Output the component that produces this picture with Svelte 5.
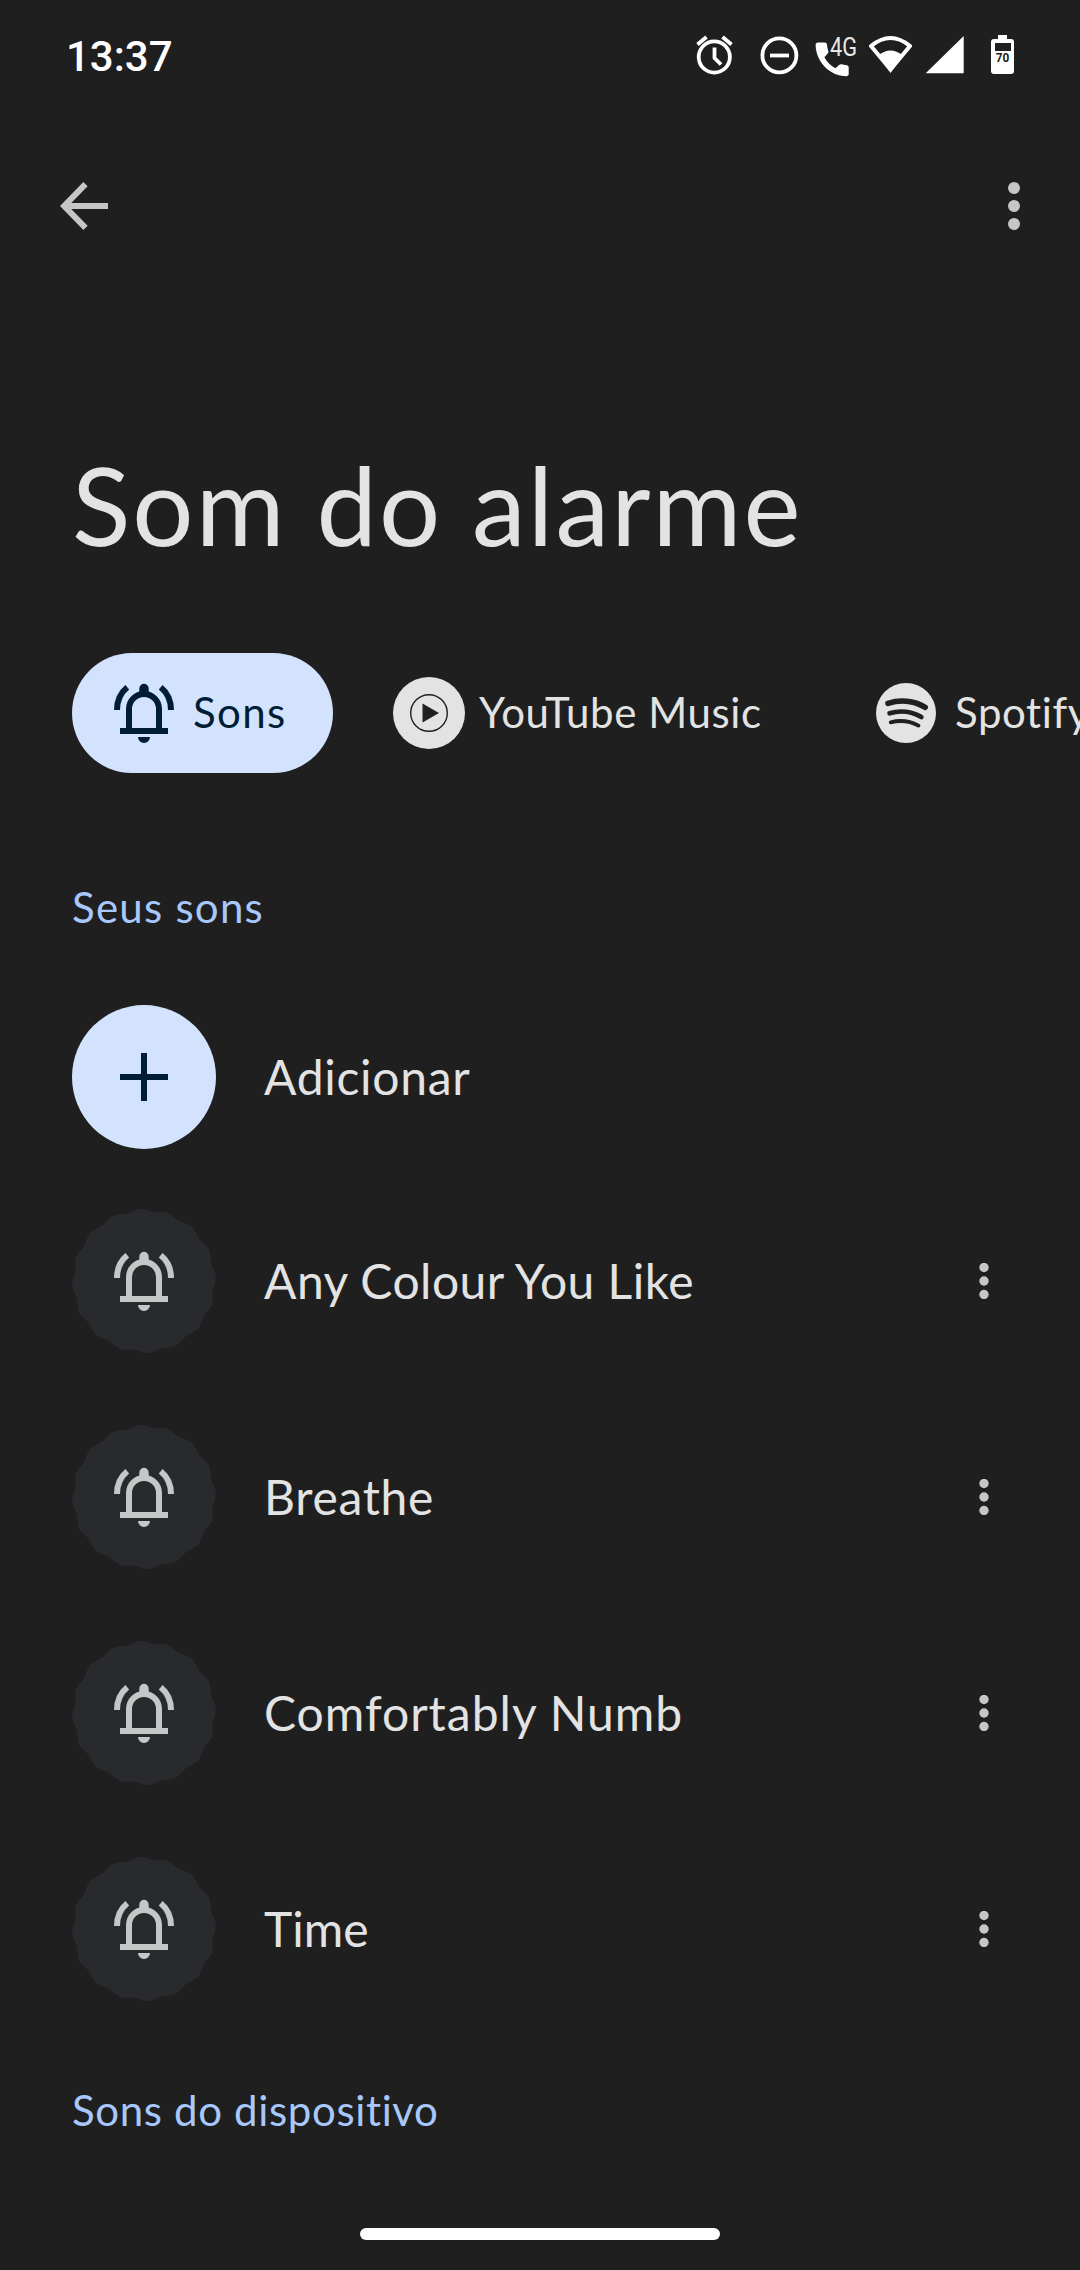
<script>
  const sounds = [
    { name: 'Any Colour You Like', cls: 'any' },
    { name: 'Breathe', cls: 'breathe' },
    { name: 'Comfortably Numb', cls: 'numb' },
    { name: 'Time', cls: 'time' }
  ];

  // Sixteen-lobed badge outline, slightly rotated
  const scallop = 'M' + Array.from({ length: 192 }, (_, i) => {
    const a = (i / 192) * Math.PI * 2;
    const r = 70.8 + 1.3 * Math.cos(16 * (a + 0.061));
    return `${(72 + r * Math.cos(a)).toFixed(2)} ${(72 + r * Math.sin(a)).toFixed(2)}`;
  }).join('L') + 'Z';
</script>

{#snippet bell()}
  <svg class="bell" viewBox="0 0 60 60">
    <path d="M15 48V26a15 15 0 0 1 30 0V48M6 48H54" fill="none" stroke="currentColor" stroke-width="6" />
    <path d="M25.300 10V5.500a4.700 4.700 0 0 1 9.400 0V10ZM24 54H36a6 6 0 0 1-12 0Z" fill="currentColor" />
    <path d="M3 27C3 17.500 7 9.500 13.300 4.300M57 27C57 17.500 53 9.500 46.700 4.300" fill="none" stroke="currentColor" stroke-width="6" />
  </svg>
{/snippet}

{#snippet dots(cls)}
  <svg class={cls} viewBox="0 0 12 48" fill="currentColor">
    <circle cx="6" cy="6" r="6" /><circle cx="6" cy="24" r="6" /><circle cx="6" cy="42" r="6" />
  </svg>
{/snippet}

{#snippet smallDots()}
  <svg class="options" viewBox="0 0 10 36" fill="currentColor">
    <circle cx="5" cy="4.500" r="4.700" /><circle cx="5" cy="18" r="4.700" /><circle cx="5" cy="31.500" r="4.700" />
  </svg>
{/snippet}

<main>
  <header class="status">
    <span class="clock">13:37</span>
    <svg class="status-icons" viewBox="0 0 340 50" fill="none">
      <g stroke="#fff" stroke-width="3.800">
        <circle cx="24.300" cy="27" r="15.600" />
        <path d="M24.500 17.500V28l6.500 6.500M7.500 14.500l9-7.500M41.500 14.500l-9-7.500" />
        <circle cx="89.400" cy="25.400" r="17" />
        <path d="M80 25.500H99" />
      </g>
      <path fill="#fff" d="M128 12.500h6.500c1.500 0 2.300.8 2.500 2 .2 2.500.6 4.500 1.300 6.500.3 1 0 2-.6 2.600l-3.300 3.700c2.700 5 6.500 8.500 11 11l3.700-3.400c.8-.7 1.700-.9 2.600-.6 1.500.5 3 .8 5 .9 1.300.1 2 1 2 2.400V44c0 1.400-1 2.200-2.400 2.200C140 46 126 32 125.600 15c0-1.500.9-2.500 2.400-2.500Z" />
      <text class="net" x="140" y="26" textLength="27" lengthAdjust="spacingAndGlyphs">4G</text>
      <path stroke="#fff" stroke-width="4" stroke-linejoin="round" d="M181 16Q200.500 0 220 16L200.500 39.500Z" />
      <path fill="#fff" d="M188.500 25.500Q200.500 15.500 212.500 25.500L200.500 43Z" />
      <path fill="#fff" d="M273.700 6V43.300H235.700Z" />
      <path fill="#fff" d="M308 5h9v4h4a3 3 0 0 1 3 3V41a3 3 0 0 1-3 3h-17a3 3 0 0 1-3-3V12a3 3 0 0 1 3-3h4Z" />
      <path fill="#202020" d="M305 13h16v8h-16Z" />
      <text class="pct" x="305.700" y="31.700" textLength="13.500" lengthAdjust="spacingAndGlyphs">70</text>
    </svg>
  </header>

  <nav class="toolbar">
    <svg class="back" viewBox="0 0 48 48" fill="none" stroke="currentColor" stroke-width="6">
      <path d="M48 24H6M25.500 2.200L4.200 24l21.300 21.800" />
    </svg>
    {@render dots('more')}
  </nav>

  <h1><span>Som do alarme</span></h1>

  <div class="tabs">
    <div class="tab active">{@render bell()}<span>Sons</span></div>
    <div class="tab youtube">
      <svg class="yt" viewBox="0 0 72 72">
        <circle cx="36" cy="36" r="36" fill="#e3e3e3" />
        <circle cx="36" cy="36" r="18.300" fill="none" stroke="#202020" stroke-width="1.400" />
        <path d="M29.500 26.500L46 36 29.500 45.500Z" fill="#202020" />
      </svg>
      <span>YouTube Music</span>
    </div>
    <div class="tab spotify">
      <svg class="sp" viewBox="0 0 60 60">
        <circle cx="30" cy="30" r="30" fill="#e3e3e3" />
        <g fill="none" stroke="#202020" stroke-linecap="round">
          <path stroke-width="5.600" d="M12 20.300C24 16.500 38 17.500 49.200 24.300" />
          <path stroke-width="4.800" d="M13.700 30.200C24 27 36 28.500 45.300 34" />
          <path stroke-width="3.800" d="M14.700 39.300C24 37 34 38 42.500 42.600" />
        </g>
      </svg>
      <span>Spotify</span>
    </div>
  </div>

  <h2 class="yours"><span>Seus sons</span></h2>

  <div class="row add">
    <div class="plus">
      <svg viewBox="0 0 48 48"><path d="M24 0V48M0 24H48" stroke="#001d35" stroke-width="6" /></svg>
    </div>
    <span class="adicionar">Adicionar</span>
  </div>

  {#each sounds as s}
    <div class="row">
      <div class="badge">
        <svg class="shape" viewBox="0 0 144 144"><path d={scallop} fill="#292a2d" /></svg>
        {@render bell()}
      </div>
      <span class={s.cls}>{s.name}</span>
      {@render smallDots()}
    </div>
  {/each}

  <h2 class="device"><span>Sons do dispositivo</span></h2>

  <footer><div class="handle"></div></footer>
</main>

<style>
  :global(body) { background: #1f1f1f; }
  main {
    width: 1080px; height: 2270px; overflow: hidden; box-sizing: border-box;
    display: flex; flex-direction: column;
    background: #1f1f1f; color: #e3e3e3;
    font-family: Lato, "Open Sans", sans-serif;
    font-variant-ligatures: none;
  }
  svg { display: block; flex: none; }
  h1, h2 { margin: 0; font-weight: 400; white-space: nowrap; }
  span { white-space: nowrap; }

  .status { height: 110px; box-sizing: border-box; display: flex; justify-content: space-between; padding: 0 50px 0 66px; }
  .clock { font: 500 42px/50px Roboto, sans-serif; color: #fff; padding-top: 32px; }
  .status-icons { width: 340px; height: 50px; margin-top: 30px; }
  .net { font: 400 26px Roboto, sans-serif; fill: #e8e8e8; }
  .pct { font: 700 13.5px Roboto, sans-serif; fill: #202020; }

  .toolbar { height: 192px; display: flex; justify-content: space-between; padding: 72px 60px 0; box-sizing: border-box; color: #c4c7c5; }
  .back { width: 48px; height: 48px; }
  .more { width: 12px; height: 48px; }

  h1 { height: 351px; box-sizing: border-box; padding: 137px 0 0 72px; font-size: 108px; line-height: 130px; letter-spacing: 2.1px; }

  .tabs { display: flex; height: 120px; font-size: 42px; }
  .tab { display: flex; align-items: center; flex: none; }
  .tab span { padding-bottom: 2px; letter-spacing: 0.6px; }
  .active { width: 261px; margin-left: 72px; box-sizing: border-box; padding-left: 42px; border-radius: 60px; background: #d3e3fd; color: #001d35; gap: 19px; }
  .active span { letter-spacing: 1.4px; }
  .bell { width: 60px; height: 60px; }
  .youtube { margin-left: 60px; width: 483px; gap: 14px; }
  .yt { width: 72px; height: 72px; }
  .sp { width: 60px; height: 60px; }
  .spotify { gap: 19px; }

  h2 { font-size: 42px; line-height: 60px; padding-left: 72px; color: #a8c7fa; }
  .yours { margin-top: 104px; height: 128px; letter-spacing: 1.25px; }
  .device { margin-top: 43px; letter-spacing: 0.64px; }

  .row { height: 216px; flex: none; display: flex; align-items: center; padding: 0 91px 0 72px; font-size: 48px; }
  .row span { margin-left: 48px; padding-bottom: 2px; }
  .adicionar, .breathe { letter-spacing: 0.7px; }
  .any { letter-spacing: 0.48px; }
  .numb { letter-spacing: 1px; }
  .add { height: 144px; margin-bottom: 24px; }
  .plus { width: 144px; height: 144px; border-radius: 50%; background: #d3e3fd; display: grid; place-items: center; }
  .plus svg { width: 48px; height: 48px; }
  .badge { width: 144px; height: 144px; display: grid; place-items: center; color: #c4c7c5; }
  .badge > :global(*) { grid-area: 1 / 1; }
  .shape { width: 144px; height: 144px; }
  .options { width: 10px; height: 36px; margin-left: auto; color: #c4c7c5; }

  footer { margin-top: auto; display: flex; justify-content: center; padding-bottom: 30px; }
  .handle { width: 360px; height: 12px; border-radius: 6px; background: #fff; }
</style>
